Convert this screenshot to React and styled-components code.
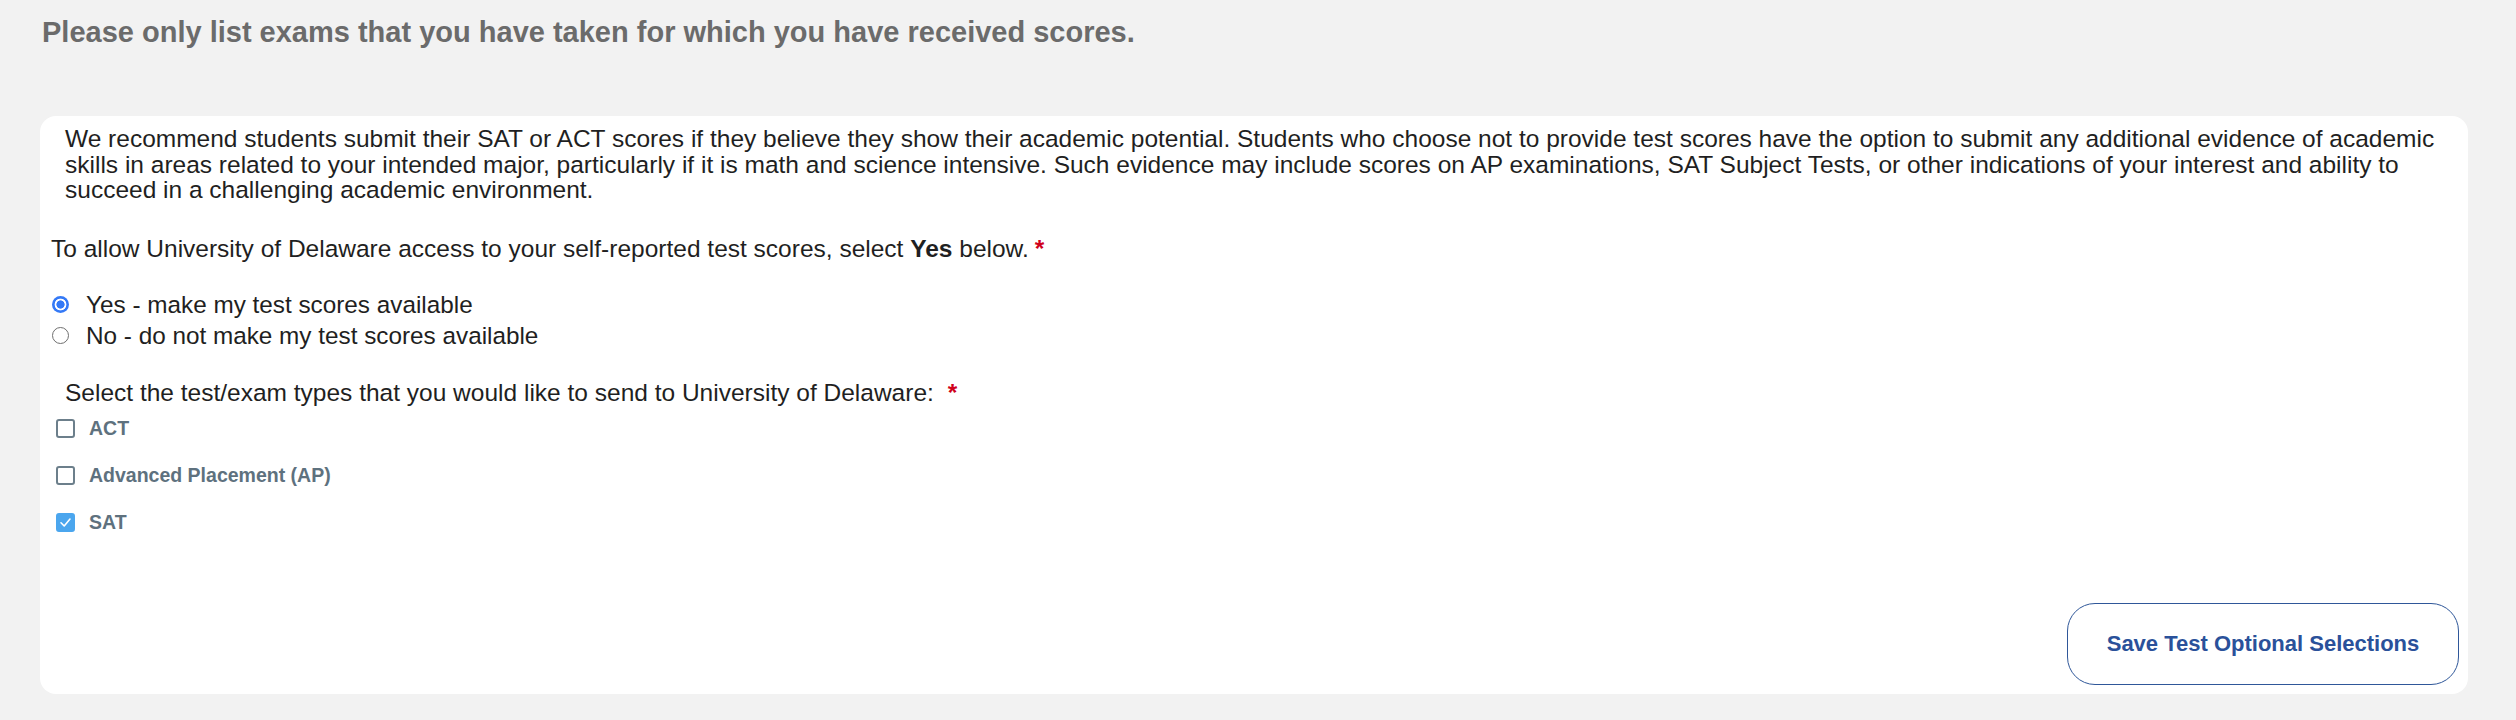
import React, { useState } from 'react'
import styled, { createGlobalStyle } from 'styled-components'

const GlobalStyle = createGlobalStyle`
  body {
    margin: 0;
    background: #f2f2f2;
    font-family: "Liberation Sans", Arial, sans-serif;
  }
`

const Page = styled.div`
  padding: 15px 48px 26px 40px;
`

const Heading = styled.h2`
  margin: 0;
  padding-left: 2px;
  font-size: 29px;
  line-height: 34px;
  font-weight: 700;
  color: #6b6b6b;
`

const Card = styled.div`
  margin-top: 67px;
  background: #fff;
  border-radius: 16px;
  padding: 10px 9px 9px 11px;
  display: flex;
  flex-direction: column;
  color: #1f1f22;
`

const Intro = styled.p`
  margin: 0;
  padding: 0 18px 0 14px;
  font-size: 24.5px;
  line-height: 25.7px;
`

const Question = styled.div`
  margin-top: ${p => p.$top}px;
  padding-left: ${p => p.$indent || 0}px;
  font-size: 24.5px;
  line-height: 26px;
  b { font-weight: 700; }
`

const Req = styled.span`
  color: #d0021b;
  font-weight: 700;
  margin-left: ${p => p.$gap || 6}px;
`

const RadioGroup = styled.div`
  margin-top: 27px;
  display: flex;
  flex-direction: column;
`

const RadioRow = styled.label`
  display: flex;
  align-items: center;
  gap: 17px;
  height: 31px;
  font-size: 24.3px;
  cursor: pointer;
`

const RadioDot = styled.span`
  width: 17px;
  height: 17px;
  margin-left: 1px;
  border-radius: 50%;
  box-sizing: border-box;
  flex-shrink: 0;
  ${p => p.$on
    ? `background: radial-gradient(circle at center, #3479f6 0 3.8px, #fff 4.4px 5.6px, #3479f6 6.2px);`
    : `background: #fff; border: 1.2px solid #6f6f6f;`}
`

const CheckList = styled.div`
  margin-top: 10px;
  display: flex;
  flex-direction: column;
  gap: 23px;
`

const CheckRow = styled.label`
  display: flex;
  align-items: center;
  gap: 14px;
  height: 24px;
  padding-left: 5px;
  font-size: 19.5px;
  font-weight: 700;
  color: #5e717e;
  cursor: pointer;
`

const Box = styled.span`
  width: 19px;
  height: 19px;
  box-sizing: border-box;
  border-radius: 3px;
  flex-shrink: 0;
  display: flex;
  align-items: center;
  justify-content: center;
  border: 2px solid ${p => (p.$on ? '#4ba6ee' : '#6c7f8b')};
  background: ${p => (p.$on ? '#4ba6ee' : '#fff')};
`

const Footer = styled.div`
  margin-top: 69px;
  display: flex;
  justify-content: flex-end;
`

const SaveButton = styled.button`
  width: 392px;
  height: 82px;
  border: 1.5px solid #2f5799;
  border-radius: 28px;
  background: #fff;
  color: #2a519a;
  font-family: "Liberation Sans", Arial, sans-serif;
  font-size: 22px;
  font-weight: 700;
  cursor: pointer;
`

const exams = ['ACT', 'Advanced Placement (AP)', 'SAT']

export default function App() {
  const [share, setShare] = useState('yes')
  const [picked, setPicked] = useState({ SAT: true })

  return (
    <Page>
      <GlobalStyle />
      <Heading>Please only list exams that you have taken for which you have received scores.</Heading>
      <Card>
        <Intro>
          We recommend students submit their SAT or ACT scores if they believe they show their academic potential.
          Students who choose not to provide test scores have the option to submit any additional evidence of academic
          skills in areas related to your intended major, particularly if it is math and science intensive. Such evidence
          may include scores on AP examinations, SAT Subject Tests, or other indications of your interest and ability to
          succeed in a challenging academic environment.
        </Intro>

        <Question $top={33}>
          To allow University of Delaware access to your self-reported test scores, select <b>Yes</b> below.
          <Req>*</Req>
        </Question>

        <RadioGroup>
          <RadioRow onClick={() => setShare('yes')}>
            <RadioDot $on={share === 'yes'} />
            Yes - make my test scores available
          </RadioRow>
          <RadioRow onClick={() => setShare('no')}>
            <RadioDot $on={share === 'no'} />
            No - do not make my test scores available
          </RadioRow>
        </RadioGroup>

        <Question $top={29} $indent={14}>
          Select the test/exam types that you would like to send to University of Delaware:
          <Req $gap={14}>*</Req>
        </Question>

        <CheckList>
          {exams.map(name => (
            <CheckRow key={name} onClick={() => setPicked({ ...picked, [name]: !picked[name] })}>
              <Box $on={!!picked[name]}>
                {picked[name] && (
                  <svg width="13" height="13" viewBox="0 0 13 13">
                    <polyline points="2,6.8 5.2,10 11,3" fill="none" stroke="#fff" strokeWidth="1.6" strokeLinecap="round" strokeLinejoin="round" />
                  </svg>
                )}
              </Box>
              {name}
            </CheckRow>
          ))}
        </CheckList>

        <Footer>
          <SaveButton>Save Test Optional Selections</SaveButton>
        </Footer>
      </Card>
    </Page>
  )
}
